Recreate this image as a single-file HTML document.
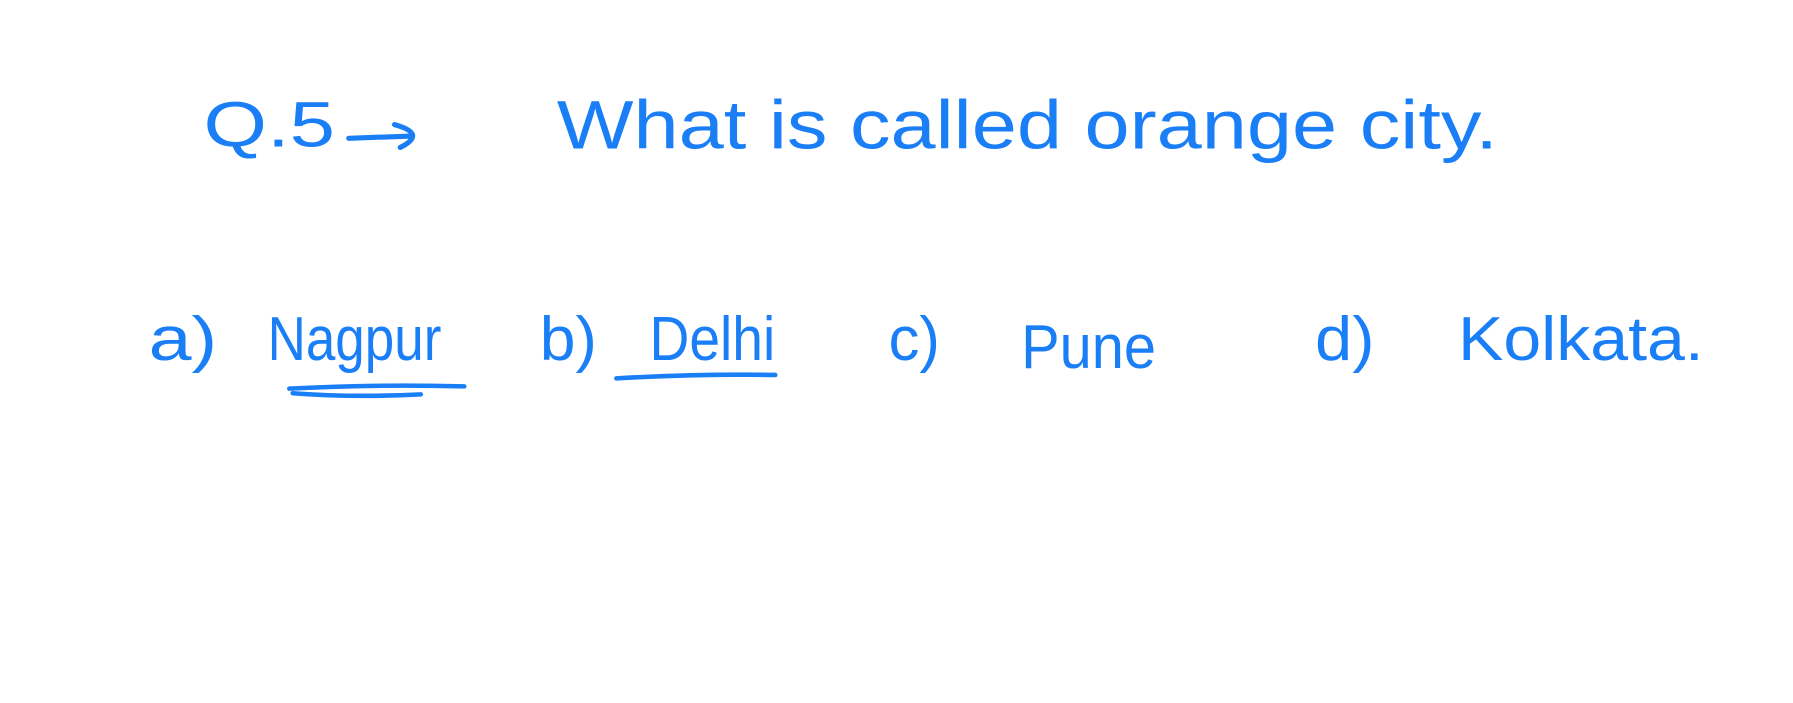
<!DOCTYPE html>
<html><head><meta charset="utf-8"><style>
html,body{margin:0;padding:0;background:#fff;width:1793px;height:703px;overflow:hidden}
svg{display:block}
text{font-family:"Liberation Sans",sans-serif;fill:#1a7ef6}
</style></head><body>
<svg width="1793" height="703" viewBox="0 0 1568 615" preserveAspectRatio="none">
<text x="178" y="128" font-size="56" textLength="115" lengthAdjust="spacingAndGlyphs">Q.5</text>
<path d="M305 121 L360 119 M345 109 Q374 117 350 129" stroke="#1a7ef6" stroke-width="4.5" fill="none" stroke-linecap="round"/>
<text x="487" y="130" font-size="60" textLength="823" lengthAdjust="spacingAndGlyphs">What is called orange city.</text>
<text x="130" y="315" font-size="54" textLength="60" lengthAdjust="spacingAndGlyphs">a)</text>
<text x="234" y="315" font-size="54" textLength="152" lengthAdjust="spacingAndGlyphs">Nagpur</text>
<path d="M253 340 Q330 336 406 338 M256 344 Q310 348 368 345" stroke="#1a7ef6" stroke-width="4" fill="none" stroke-linecap="round"/>
<text x="472" y="315" font-size="54" textLength="50" lengthAdjust="spacingAndGlyphs">b)</text>
<text x="568" y="315" font-size="54" textLength="110" lengthAdjust="spacingAndGlyphs">Delhi</text>
<path d="M539 331 Q610 327 678 328" stroke="#1a7ef6" stroke-width="4" fill="none" stroke-linecap="round"/>
<text x="777" y="315" font-size="54" textLength="45" lengthAdjust="spacingAndGlyphs">c)</text>
<text x="893" y="322" font-size="54" textLength="118" lengthAdjust="spacingAndGlyphs">Pune</text>
<text x="1150" y="315" font-size="54" textLength="52" lengthAdjust="spacingAndGlyphs">d)</text>
<text x="1275" y="315" font-size="54" textLength="215" lengthAdjust="spacingAndGlyphs">Kolkata.</text>
</svg>
</body></html>
